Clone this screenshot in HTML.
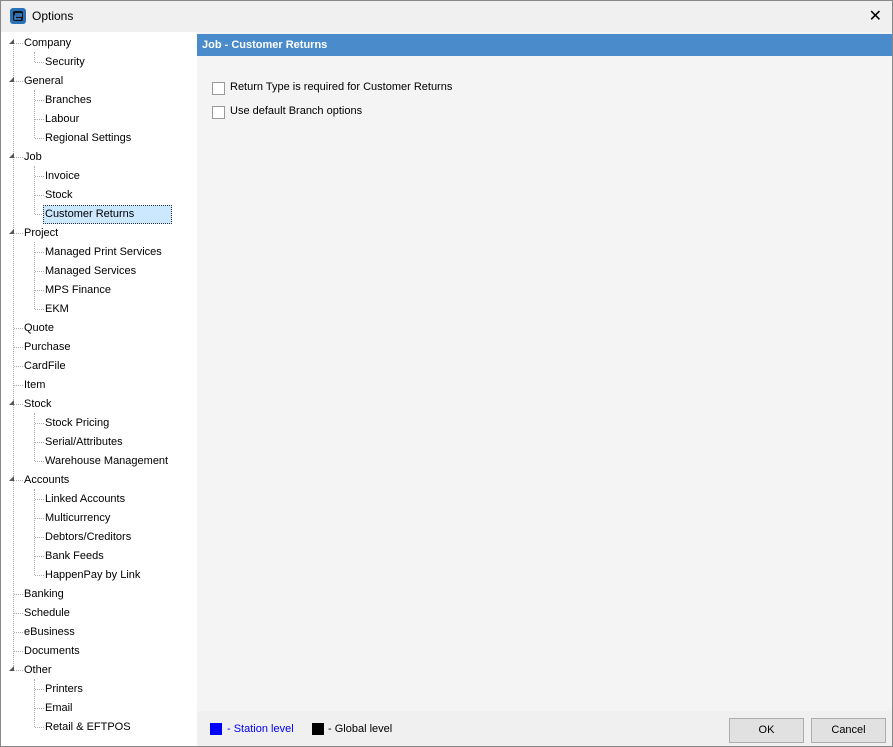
<!DOCTYPE html><html><head><style>
body{margin:0;width:893px;height:747px;overflow:hidden;font-family:"Liberation Sans",sans-serif;font-size:11px;background:#fff;position:relative}
.win{position:absolute;left:0;top:0;width:891px;height:745px;border:1px solid #888;background:#fff}
.title{position:absolute;left:0;top:0;width:891px;height:31px;background:#f0f0f0}
.title span{position:absolute;left:31px;top:8px;font-size:12px;color:#000}
.close{position:absolute;right:10px;top:5px;font-size:16px}
.tree{position:absolute;left:0;top:31px;width:195px;height:714px;background:#fff}
.it{position:absolute;height:18px;line-height:18px;color:#000;white-space:nowrap}
.hl{position:absolute;border-top:1px dotted #aaa;width:9px}
.vl{position:absolute;border-left:1px dotted #aaa}
.tri{position:absolute;width:0;height:0;border-left:5px solid transparent;border-bottom:5px solid #555}
.main{position:absolute;left:196px;top:31px;width:695px;height:679px;background:#f4f4f4}
.hdr{position:absolute;left:0;top:2px;width:695px;height:22px;background:#4a8ccb;color:#fff;font-weight:bold;line-height:22px;padding-left:5px;box-sizing:border-box}
.cb{position:absolute;width:11px;height:11px;border:1px solid #999;background:#fff}
.foot{position:absolute;left:196px;top:710px;width:695px;height:35px;background:#f0f0f0}
.btn{position:absolute;top:7px;width:73px;height:23px;border:1px solid #adadad;background:#e1e1e1;text-align:center;line-height:23px;font-size:11px}
</style></head><body><div class="win">
<div class="title"><svg style="position:absolute;left:9px;top:7px" width="16" height="16"><rect x="0" y="0" width="16" height="16" rx="3" fill="#2a72b8"/><rect x="3" y="3" width="10" height="10" rx="2" fill="#111"/><path d="M5 6h6v2H5v3h6" stroke="#3d8de0" stroke-width="1.5" fill="none"/></svg><span>Options</span><div class="close">✕</div></div>
<div class="tree" id="t"></div>
<div class="main"><div class="hdr">Job - Customer Returns</div>
<div class="cb" style="left:15px;top:50px"></div><div class="it" style="left:33px;top:46px">Return Type is required for Customer Returns</div>
<div class="cb" style="left:15px;top:74px"></div><div class="it" style="left:33px;top:70px">Use default Branch options</div>
</div>
<div style="position:absolute;left:891px;top:31px"></div>
<div class="foot">
<div style="position:absolute;left:13px;top:12px;width:12px;height:12px;background:#0000ff"></div><div class="it" style="left:30px;top:9px;color:#0000ff">- Station level</div>
<div style="position:absolute;left:115px;top:12px;width:12px;height:12px;background:#000"></div><div class="it" style="left:131px;top:9px">- Global level</div>
<div class="btn" style="left:532px">OK</div><div class="btn" style="left:614px">Cancel</div>
</div>
</div>
<script>
var d=[[0,"Company"],[1,"Security"],[0,"General"],[1,"Branches"],[1,"Labour"],[1,"Regional Settings"],[0,"Job"],[1,"Invoice"],[1,"Stock"],[1,"Customer Returns"],[0,"Project"],[1,"Managed Print Services"],[1,"Managed Services"],[1,"MPS Finance"],[1,"EKM"],[0,"Quote"],[0,"Purchase"],[0,"CardFile"],[0,"Item"],[0,"Stock"],[1,"Stock Pricing"],[1,"Serial/Attributes"],[1,"Warehouse Management"],[0,"Accounts"],[1,"Linked Accounts"],[1,"Multicurrency"],[1,"Debtors/Creditors"],[1,"Bank Feeds"],[1,"HappenPay by Link"],[0,"Banking"],[0,"Schedule"],[0,"eBusiness"],[0,"Documents"],[0,"Other"],[1,"Printers"],[1,"Email"],[1,"Retail & EFTPOS"]];
var h="",t=document.getElementById("t");
h+='<div class="vl" style="left:12px;top:11px;height:'+(33*19)+'px"></div>';
var last=-1;
d.forEach(function(e,i){var y=2+i*19,c=y+9;
if(e[0]==0){var exp=d[i+1]&&d[i+1][0]==1;h+='<div class="hl" style="left:13px;top:'+c+'px"></div>';if(exp){h+='<div class="tri" style="left:8px;top:'+(c-4)+'px"></div>';last=i;h+='<div class="vl" id="v'+i+'" style="left:33px;top:'+(c+9)+'px;height:0"></div>';}
h+='<div class="it" style="left:23px;top:'+y+'px">'+e[1].replace("&","&amp;")+'</div>';}
else{h+='<div class="hl" style="left:34px;top:'+c+'px"></div>';
var sel=e[1]=="Customer Returns";
h+='<div class="it" style="left:'+(sel?42:44)+'px;top:'+y+'px;'+(sel?'background:#cce8ff;border:1px dotted #333;padding:0 1px;width:125px;height:17px;line-height:17px':'')+'">'+e[1].replace("&","&amp;")+'</div>';}
});
t.innerHTML=h;
d.forEach(function(e,i){if(e[0]==0&&d[i+1]&&d[i+1][0]==1){var j=i+1;while(d[j+1]&&d[j+1][0]==1)j++;var v=document.getElementById("v"+i);v.style.height=((j-i)*19-9)+"px";}});
</script>
</body></html>
